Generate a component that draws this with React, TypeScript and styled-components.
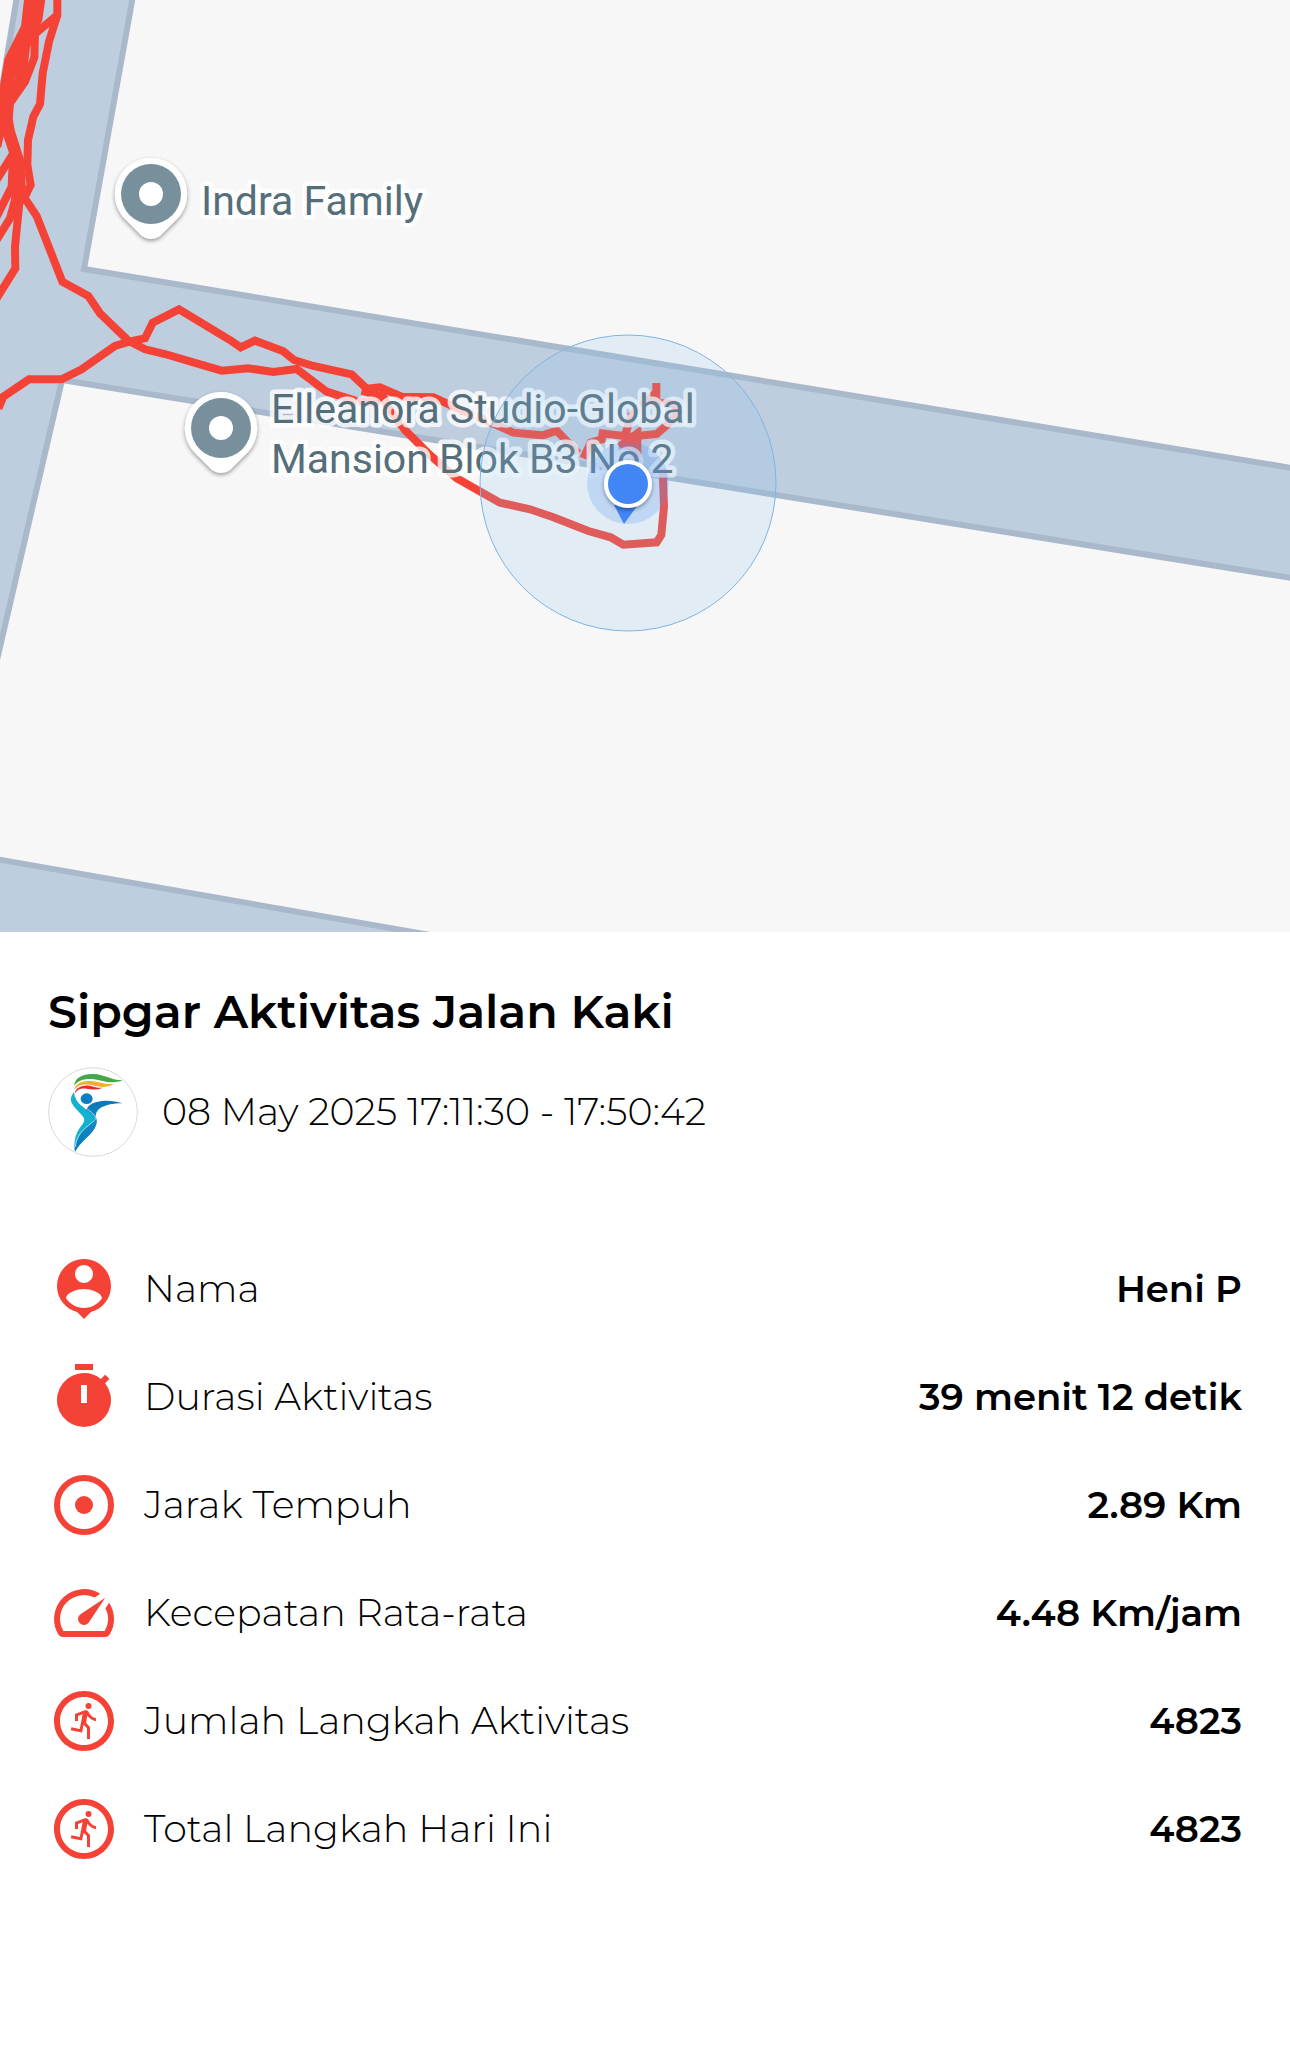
import React from 'react';
import styled, { createGlobalStyle } from 'styled-components';
import { MdOutlineRunCircle } from 'react-icons/md';

const GlobalStyle = createGlobalStyle`
  * { box-sizing: border-box; }
  body {
    margin: 0;
    background: #fff;
    color: #000;
    font-family: Montserrat, Inter, sans-serif;
  }
`;

const Page = styled.main`
  display: flex;
  flex-direction: column;
`;

const MapView = styled.svg`
  display: block;
  width: 100%;
  aspect-ratio: 1290 / 932;
  background: #f7f7f7;
`;

const Road = styled.path`
  fill: #bfcedf;
  stroke: #a9b9cb;
  stroke-width: 6;
`;

const Track = styled.polyline`
  fill: none;
  stroke: #f44336;
  stroke-width: 24;
`;

const PlaceLabel = styled.text`
  font-family: Roboto, Inter, sans-serif;
  font-size: 41px;
  fill: #546e7a;
  stroke: rgba(255, 255, 255, 0.8);
  stroke-width: 9px;
  stroke-linejoin: round;
  paint-order: stroke;
`;

const Details = styled.section`
  display: flex;
  flex-direction: column;
  padding: 50px 48px;
`;

const Title = styled.h1`
  margin: 0;
  font-size: 46px;
  line-height: 60px;
  font-weight: 600;
`;

const Session = styled.div`
  display: flex;
  align-items: center;
  gap: 24px;
  margin: 25px 0 78px;
`;

const Logo = styled.svg`
  width: 90px;
  height: 90px;
  flex: none;
`;

const SessionTime = styled.time`
  font-size: 38px;
  line-height: 48px;
  font-weight: 300;
`;

const Stats = styled.dl`
  display: flex;
  flex-direction: column;
  margin: 0;
`;

const StatRow = styled.div`
  display: flex;
  align-items: center;
  justify-content: space-between;
  min-height: 108px;
`;

const StatLabel = styled.dt`
  display: flex;
  align-items: center;
  gap: 24px;
  font-size: 38px;
  line-height: 48px;
  font-weight: 300;

  svg {
    width: 72px;
    height: 72px;
    flex: none;
    fill: #f44336;
    color: #f44336;
  }
`;

const StatValue = styled.dd`
  margin: 0;
  font-size: 37px;
  line-height: 48px;
  font-weight: 600;
  text-align: right;
`;

const tracks = [
  '85,-10 75,80 25,180 10,270 -5,340',
  '115,-10 108,60 60,190 25,240 20,360 50,480 60,590 45,740 46,805 -10,895',
  '172,-10 172,45 105,102 103,172 75,245 30,310 25,370 60,480 68,600',
  '85,-10 80,120 70,210 25,300 20,400 40,460 -10,540',
  '40,440 35,560 -10,650',
  '52,480 45,600 30,655 -10,720',
  '125,-10 115,60 80,110 30,180 25,250 5,300 5,380 -8,440',
  '98,-10 92,90 40,180 20,320 40,440',
  '172,45 147,125 128,220 120,312 100,350 84,420 82,495 92,555 70,600 78,600 110,648 187,845 265,888 300,940 385,1022 435,1048 495,1062 590,1090 665,1112 745,1105 820,1116 890,1107 980,1175 1075,1205 1150,1205 1215,1290 1290,1365 1370,1435 1500,1508 1590,1528 1660,1552 1765,1593 1832,1612 1870,1634 1970,1627 1984,1605 1992,1520 1988,1405',
  '-5,1225 10,1190 87,1138 185,1138 245,1108 345,1038 390,1024 435,1015 458,968 537,928 690,1020 722,1042 765,1022 850,1054 882,1080 940,1098 1055,1123 1100,1166 1140,1162 1205,1190 1300,1192 1380,1228 1500,1280 1540,1298 1628,1306 1670,1292 1735,1360',
  '1085,1172 1150,1190 1172,1240',
  '1750,1375 1772,1328 1805,1318 1808,1300 1890,1310 1970,1302 2005,1272 2035,1235 2020,1212 1969,1208 1969,1149',
  '1875,1305 1895,1245 1965,1180',
  '1858,1340 1912,1300 1912,1370 1880,1310',
  '1868,1330 1900,1345 1912,1385',
];

type Point = { x: number; y: number };

const Pin = ({ x, y }: Point) => (
  <g transform={`translate(${x} ${y})`}>
    <path
      d="M0-36A36 36 0 0 1 27 24L9 42Q0 48-9 42L-27 24A36 36 0 0 1 0-36Z"
      fill="#fff"
      filter="url(#lift)"
    />
    <circle r="30" fill="#78909c" />
    <circle r="12" fill="#fff" />
  </g>
);

const RouteMap = () => (
  <MapView viewBox="0 0 1290 932" preserveAspectRatio="xMidYMid slice" role="img" aria-label="Peta rute">
    <defs>
      <filter id="lift" x="-30%" y="-30%" width="160%" height="160%">
        <feDropShadow dx="0" dy="2" stdDeviation="2" floodColor="#000" floodOpacity="0.4" />
      </filter>
    </defs>
    <Road d="M18-10L-10 160V690L62 380L1310 581V471L84 269L134-10Z" />
    <Road d="M-10 858L430 935V950H-10Z" />
    <g transform="scale(0.33333)">
      {tracks.map((points) => (
        <Track key={points} points={points} />
      ))}
    </g>
    <Pin x={151} y={194} />
    <Pin x={221} y={428} />
    <PlaceLabel x="201" y="215">Indra Family</PlaceLabel>
    <PlaceLabel>
      <tspan x="271" y="423">Elleanora Studio-Global</tspan>
      <tspan x="271" y="473">Mansion Blok B3 No 2</tspan>
    </PlaceLabel>
    <circle cx="628" cy="483" r="41" fill="#4285f4" fillOpacity="0.22" />
    <circle cx="628" cy="483" r="148" fill="#8cc5f2" fillOpacity="0.2" stroke="#7fb4e4" />
    <path d="M614 505L637 506L624 524Z" fill="#4285f4" />
    <circle cx="628" cy="484" r="24" fill="#fff" filter="url(#lift)" />
    <circle cx="628" cy="484" r="20" fill="#4285f4" />
  </MapView>
);

const ClubLogo = () => (
  <Logo viewBox="25 36 270 270" role="img" aria-label="Sipgar">
    <defs>
      <linearGradient id="body" x1="0" y1="0" x2="0" y2="1">
        <stop offset="0" stopColor="#0f75b8" />
        <stop offset="0.4" stopColor="#1488c4" />
        <stop offset="1" stopColor="#0676bb" />
      </linearGradient>
    </defs>
    <circle cx="160" cy="171" r="133" fill="#fff" stroke="#c4c4c4" strokeWidth="2" />
    <path d="M103 92C106 68 130 56 160 57C197 58 215 76 249 76C228 85 205 82 185 77C150 68 120 70 103 92Z" fill="#43a847" />
    <path d="M104 104C106 86 130 76 155 78C180 81 200 90 223 86C203 99 180 97 160 91C135 85 115 88 104 104Z" fill="#f2ae2e" />
    <path d="M105 116C107 97 130 89 150 92C165 96 175 99 189 98C172 106 155 103 140 101C125 98 112 103 105 116Z" fill="#df2f2d" />
    <path d="M249 145C215 133 170 134 150 151C139 160 139 168 133 178L138 200C112 230 103 262 106 291C122 260 148 248 164 222C174 206 172 196 169 186C166 164 190 145 249 145Z" fill="url(#body)" />
    <path d="M104 110C88 128 92 142 106 158L128 182C137 192 135 200 124 214C107 236 101 262 106 291C106 255 122 232 148 210L168 190C164 178 148 172 130 156C112 142 105 128 104 110Z" fill="#12b1cf" />
    <path d="M104 112C106 150 166 168 169 190C158 210 112 222 107 276" fill="none" stroke="#fff" strokeWidth="2" />
    <ellipse cx="141" cy="131" rx="18" ry="16" fill="#0a7ec0" />
  </Logo>
);

const PersonPinIcon = () => (
  <svg viewBox="0 0 24 24" aria-hidden="true">
    <path d="M12 2c-4.97 0-9 4.03-9 9 0 4.17 2.84 7.67 6.69 8.69L12 22l2.31-2.31C18.16 18.67 21 15.17 21 11c0-4.97-4.03-9-9-9zm0 2c1.66 0 3 1.34 3 3s-1.34 3-3 3-3-1.34-3-3 1.34-3 3-3zm0 14.3c-2.5 0-4.71-1.28-6-3.22.03-1.99 4-3.08 6-3.08 1.99 0 5.97 1.09 6 3.08-1.29 1.94-3.5 3.22-6 3.22z" />
  </svg>
);

const TimerIcon = () => (
  <svg viewBox="0 0 24 24" aria-hidden="true">
    <path
      fillRule="evenodd"
      d="M9 1h6v2H9zM11 8h2v6h-2zM19.03 7.39l1.42-1.42c-.43-.51-.9-.99-1.41-1.41l-1.42 1.42A8.96 8.96 0 0 0 12 4a9 9 0 1 0 7.03 3.39z"
    />
  </svg>
);

const TargetIcon = () => (
  <svg viewBox="0 0 24 24" aria-hidden="true">
    <circle cx="12" cy="12" r="9" fill="none" stroke="currentColor" strokeWidth="2" />
    <circle cx="12" cy="12" r="3" />
  </svg>
);

const SpeedIcon = () => (
  <svg viewBox="0 0 24 24" aria-hidden="true">
    <path d="m20.38 8.57-1.23 1.85a8 8 0 0 1-.22 7.58H5.07A8 8 0 0 1 15.58 6.85l1.85-1.23A10 10 0 0 0 3.35 19a2 2 0 0 0 1.72 1h13.85a2 2 0 0 0 1.74-1 10 10 0 0 0-.27-10.44z" />
    <path d="M10.59 15.41a2 2 0 0 0 2.83 0l5.66-8.49-8.49 5.66a2 2 0 0 0 0 2.83z" />
  </svg>
);

const stats = [
  { label: 'Nama', value: 'Heni P', Icon: PersonPinIcon },
  { label: 'Durasi Aktivitas', value: '39 menit 12 detik', Icon: TimerIcon },
  { label: 'Jarak Tempuh', value: '2.89 Km', Icon: TargetIcon },
  { label: 'Kecepatan Rata-rata', value: '4.48 Km/jam', Icon: SpeedIcon },
  { label: 'Jumlah Langkah Aktivitas', value: '4823', Icon: MdOutlineRunCircle },
  { label: 'Total Langkah Hari Ini', value: '4823', Icon: MdOutlineRunCircle },
];

export default function App() {
  return (
    <Page>
      <GlobalStyle />
      <RouteMap />
      <Details>
        <Title>Sipgar Aktivitas Jalan Kaki</Title>
        <Session>
          <ClubLogo />
          <SessionTime>08 May 2025 17:11:30 - 17:50:42</SessionTime>
        </Session>
        <Stats>
          {stats.map(({ label, value, Icon }) => (
            <StatRow key={label}>
              <StatLabel>
                <Icon />
                {label}
              </StatLabel>
              <StatValue>{value}</StatValue>
            </StatRow>
          ))}
        </Stats>
      </Details>
    </Page>
  );
}
